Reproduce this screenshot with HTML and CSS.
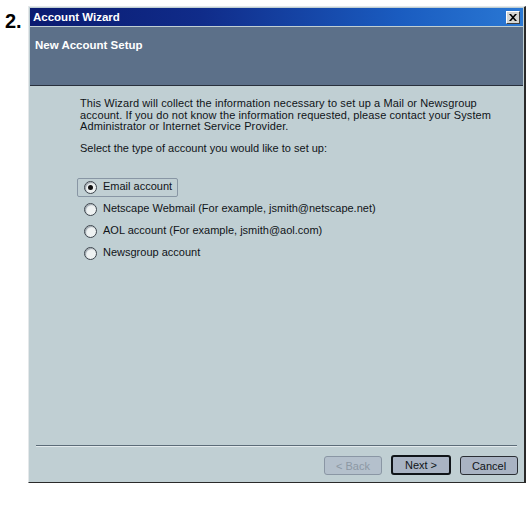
FILE: index.html
```html
<!DOCTYPE html>
<html>
<head>
<meta charset="utf-8">
<link rel="stylesheet" href="styles.css">
</head>
<body>
<div class="page">
  <div class="step">2.</div>
  <div class="window">
    <div class="titlebar">
      <span class="title">Account Wizard</span>
      <span class="close"><svg width="8" height="7" viewBox="0 0 8 7"><path d="M0 0h2l2 2.2L6 0h2L5 3.5 8 7H6L4 4.8 2 7H0l3-3.5z" fill="#000"/></svg></span>
    </div>
    <div class="header">New Account Setup</div>
    <div class="content">
      <p class="intro">This Wizard will collect the information necessary to set up a Mail or Newsgroup account. If you do not know the information requested, please contact your System Administrator or Internet Service Provider.</p>
      <p class="prompt">Select the type of account you would like to set up:</p>
      <div class="options">
        <div class="option focused"><span class="radio checked"></span><span>Email account</span></div>
        <div class="option"><span class="radio"></span><span>Netscape Webmail (For example, jsmith@netscape.net)</span></div>
        <div class="option"><span class="radio"></span><span>AOL account (For example, jsmith@aol.com)</span></div>
        <div class="option"><span class="radio"></span><span>Newsgroup account</span></div>
      </div>
    </div>
    <div class="footer">
      <div class="sep"></div>
      <div class="buttons">
        <span class="btn disabled">&lt; Back</span>
        <span class="btn default">Next &gt;</span>
        <span class="btn">Cancel</span>
      </div>
    </div>
  </div>
</div>
</body>
</html>
```

FILE: styles.css
```css
html, body {
  margin: 0;
  padding: 0;
  background: #ffffff;
}
.page {
  display: flex;
  align-items: flex-start;
}
.step {
  width: 28px;
  box-sizing: border-box;
  padding: 11px 0 0 5px;
  font-family: "Liberation Sans", Arial, sans-serif;
  font-weight: bold;
  font-size: 20px;
  line-height: 20px;
  color: #000;
}
.window {
  margin-top: 6px;
  width: 498px;
  height: 477px;
  box-sizing: border-box;
  border-top: 1px solid #e4e8ea;
  border-left: 1px solid #e4e8ea;
  border-right: 2px solid #2a2a2a;
  border-bottom: 1px solid #2a2a2a;
  padding: 1px 1px 0 1px;
  background: #c0cfd3;
  display: flex;
  flex-direction: column;
  font-family: "Liberation Sans", Arial, sans-serif;
}
.titlebar {
  height: 18px;
  background: linear-gradient(to right, #0a1a70 0%, #102c8a 35%, #1a5cc0 75%, #2a78d4 100%);
  display: flex;
  align-items: center;
  justify-content: space-between;
  padding: 0 3px 0 3px;
}
.title {
  color: #ffffff;
  font-weight: bold;
  font-size: 11.5px;
}
.close {
  width: 14px;
  height: 13px;
  box-sizing: border-box;
  background: #d6d6d2;
  border-top: 1px solid #ffffff;
  border-left: 1px solid #ffffff;
  border-right: 1px solid #404040;
  border-bottom: 1px solid #404040;
  display: flex;
  align-items: center;
  justify-content: center;
}
.header {
  margin-top: 1px;
  height: 59px;
  box-sizing: border-box;
  background: #5c7089;
  border-bottom: 1px solid #28303c;
  color: #ffffff;
  font-weight: bold;
  font-size: 11.5px;
  padding: 12px 0 0 5px;
}
.content {
  flex: 1;
  padding: 12px 0 0 50px;
  font-size: 11px;
  line-height: 11.5px;
  color: #101418;
}
.intro {
  margin: 0;
  width: 420px;
  letter-spacing: 0.1px;
}
.prompt {
  margin: 10.5px 0 0 0;
}
.options {
  margin: 23px 0 0 -3px;
  display: flex;
  flex-direction: column;
  align-items: flex-start;
  gap: 3px;
}
.option {
  height: 19px;
  box-sizing: border-box;
  border: 1px solid transparent;
  border-radius: 2px;
  padding: 0 5px 0 6px;
  display: flex;
  align-items: center;
  gap: 6px;
}
.option.focused {
  border-color: #8896a4;
}
.radio {
  width: 13px;
  height: 13px;
  box-sizing: border-box;
  border-radius: 50%;
  border: 1px solid #3c444c;
  background: #eef2f2;
  box-shadow: inset 1px 1px 1px #9aa4ac;
  display: flex;
  align-items: center;
  justify-content: center;
}
.radio.checked::after {
  content: "";
  width: 5px;
  height: 5px;
  border-radius: 50%;
  background: #101010;
}
.footer {
  padding: 0 5px 7px 6px;
}
.sep {
  height: 1px;
  background: #5c6c78;
  border-bottom: 1px solid #e2eaec;
  margin-right: 1px;
}
.buttons {
  margin-top: 9px;
  display: flex;
  justify-content: flex-end;
  gap: 9px;
}
.btn {
  width: 58px;
  height: 19px;
  box-sizing: border-box;
  border: 1px solid #2a2e34;
  border-radius: 3px;
  background: #a9b3c3;
  font-size: 11px;
  color: #101418;
  display: flex;
  align-items: center;
  justify-content: center;
}
.btn.default {
  width: 60px;
  height: 20px;
  border: 2px solid #101418;
  margin-top: -1px;
}
.btn.disabled {
  border-color: #8a96a4;
  background: #b4c0cc;
  color: #8c98a4;
}
```
